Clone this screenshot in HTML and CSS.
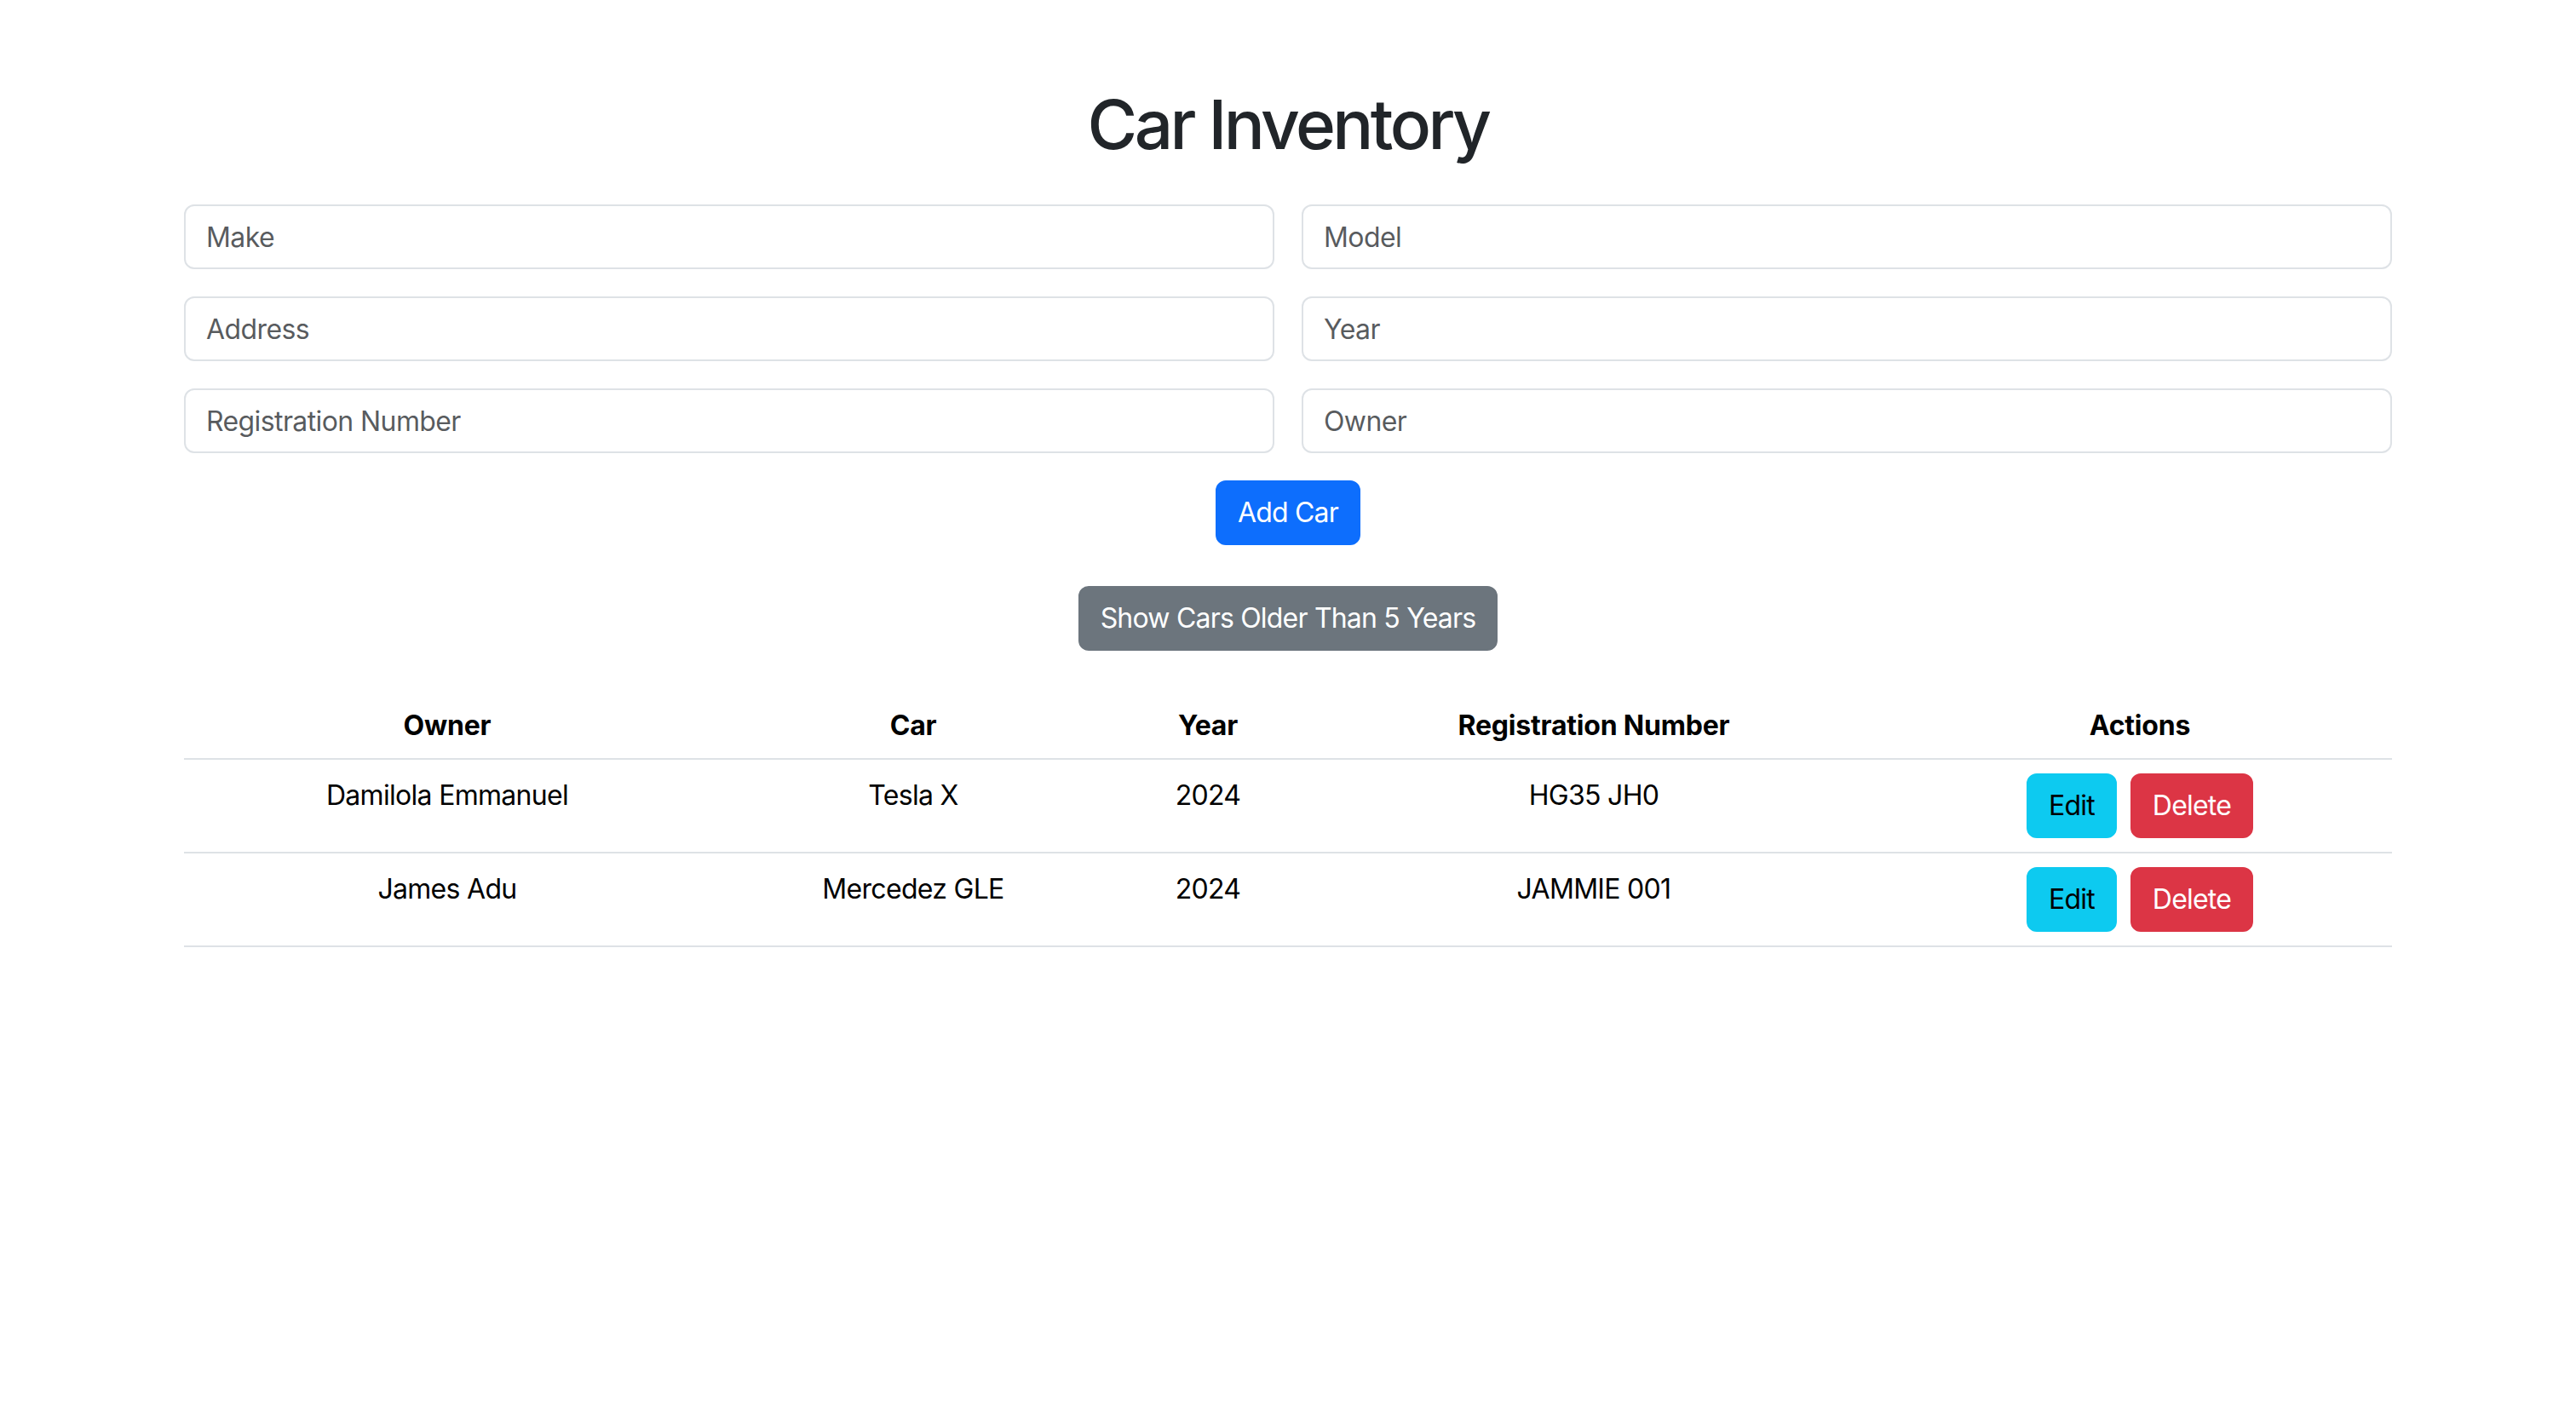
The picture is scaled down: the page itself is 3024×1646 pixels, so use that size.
FILE: index.html
```html
<!DOCTYPE html>
<html lang="en">
<head>
<meta charset="utf-8">
<title>Car Inventory</title>
<link rel="stylesheet" href="styles.css">
</head>
<body>
<div class="container">
  <h1 class="title">Car Inventory</h1>
  <form class="car-form">
    <div class="form-grid">
      <input class="form-control" type="text" placeholder="Make">
      <input class="form-control" type="text" placeholder="Model">
      <input class="form-control" type="text" placeholder="Address">
      <input class="form-control" type="text" placeholder="Year">
      <input class="form-control" type="text" placeholder="Registration Number">
      <input class="form-control" type="text" placeholder="Owner">
    </div>
    <div class="center-row add-row">
      <button type="button" class="btn btn-primary">Add Car</button>
    </div>
  </form>
  <div class="center-row filter-row">
    <button type="button" class="btn btn-secondary">Show Cars Older Than 5 Years</button>
  </div>
  <table class="table">
    <colgroup>
      <col class="c-owner">
      <col class="c-car">
      <col class="c-year">
      <col class="c-reg">
      <col class="c-actions">
    </colgroup>
    <thead>
      <tr>
        <th>Owner</th>
        <th>Car</th>
        <th>Year</th>
        <th>Registration Number</th>
        <th>Actions</th>
      </tr>
    </thead>
    <tbody>
      <tr>
        <td>Damilola Emmanuel</td>
        <td>Tesla X</td>
        <td>2024</td>
        <td>HG35 JH0</td>
        <td><button type="button" class="btn btn-info">Edit</button><button type="button" class="btn btn-danger">Delete</button></td>
      </tr>
      <tr>
        <td>James Adu</td>
        <td>Mercedez GLE</td>
        <td>2024</td>
        <td>JAMMIE 001</td>
        <td><button type="button" class="btn btn-info">Edit</button><button type="button" class="btn btn-danger">Delete</button></td>
      </tr>
    </tbody>
  </table>
</div>
</body>
</html>
```

FILE: styles.css
```css
* { box-sizing: border-box; }

html, body {
  margin: 0;
  background: #ffffff;
}

body {
  font-family: Inter, "Noto Sans", "Liberation Sans", sans-serif;
  font-size: 32px;
  line-height: 48px;
  color: #212529;
}

.container {
  width: 2592px;
  margin: 0 auto;
  padding-top: 98px;
}

.title {
  margin: 0 0 46px;
  font-size: 80px;
  line-height: 96px;
  font-weight: 500;
  text-align: center;
  color: #212529;
  letter-spacing: -3.6px;
}

.car-form { margin: 0; }

.form-grid {
  display: grid;
  grid-template-columns: 1fr 1fr;
  column-gap: 32px;
  row-gap: 32px;
  margin-bottom: 32px;
}

.form-control {
  display: block;
  width: 100%;
  height: 76px;
  padding: 12px 24px;
  font-family: inherit;
  font-size: 32px;
  line-height: 48px;
  color: #212529;
  background: #fff;
  border: 2px solid #dee2e6;
  border-radius: 12px;
  outline: none;
  letter-spacing: -0.6px;
}

.form-control::placeholder {
  color: rgba(33, 37, 41, 0.75);
  opacity: 1;
}

.center-row {
  display: flex;
  justify-content: center;
}

.add-row { margin-bottom: 48px; }
.filter-row { margin-bottom: 46px; }

.btn {
  display: inline-block;
  padding: 12px 24px;
  font-family: inherit;
  font-size: 32px;
  line-height: 48px;
  font-weight: 400;
  border: 2px solid transparent;
  border-radius: 12px;
  cursor: pointer;
  letter-spacing: -0.8px;
}

.btn-primary { background: #0d6efd; border-color: #0d6efd; color: #fff; }
.btn-secondary { background: #6c757d; border-color: #6c757d; color: #fff; }
.btn-info { background: #0dcaf0; border-color: #0dcaf0; color: #000; margin-right: 16px; }
.btn-danger { background: #dc3545; border-color: #dc3545; color: #fff; }

.table {
  width: 100%;
  border-collapse: collapse;
  table-layout: fixed;
  color: #000;
  vertical-align: top;
}

.c-owner { width: 618px; }
.c-car { width: 476px; }
.c-year { width: 216px; }
.c-reg { width: 690px; }
.c-actions { width: 592px; }

.table th,
.table td {
  padding: 18px 16px 14px;
  text-align: center;
  border-bottom: 2px solid #dee2e6;
  vertical-align: top;
  letter-spacing: -0.7px;
}

.table td:last-child { padding-top: 16px; padding-bottom: 16px; }

.table th { font-weight: 700; letter-spacing: -0.2px; }
```
